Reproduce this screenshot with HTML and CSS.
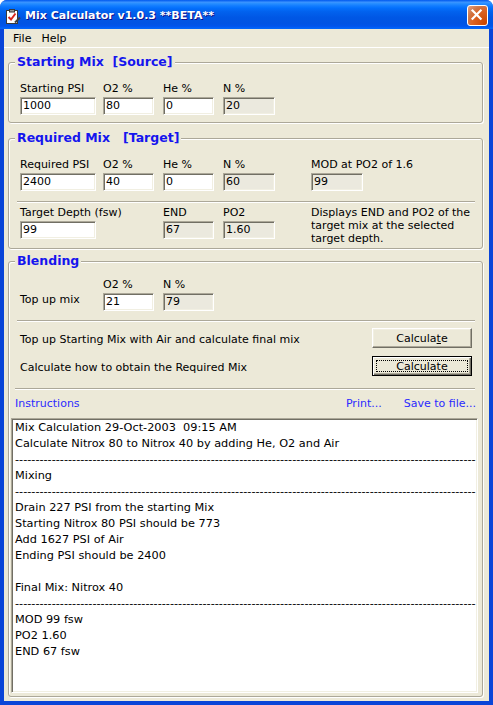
FILE: index.html
```html
<!DOCTYPE html>
<html>
<head>
<meta charset="utf-8">
<title>Mix Calculator</title>
<link rel="stylesheet" href="styles.css">
</head>
<body>
<div class="window">
  <div class="titlebar">
    <svg class="app-icon" viewBox="0 0 16 16" width="16" height="16">
      <rect x="1.5" y="2.5" width="11" height="13" fill="#fff" stroke="#3a3a3a"/>
      <rect x="4.5" y="1.5" width="5" height="2.5" fill="#9a9a9a" stroke="#3a3a3a"/>
      <path d="M3.5 9 L6 11.5 L10.5 5.5" stroke="#d8261c" stroke-width="2" fill="none"/>
      <path d="M10 14.5 L15 9.5" stroke="#404040" stroke-width="2"/>
    </svg>
    <span class="title">Mix Calculator v1.0.3 **BETA**</span>
    <div class="close">
      <svg viewBox="0 0 21 21" width="19" height="19"><path d="M5 5 L14 14 M14 5 L5 14" stroke="#fff" stroke-width="2.4" stroke-linecap="square"/></svg>
    </div>
  </div>
  <div class="client">
    <div class="menubar"><span>File</span><span>Help</span></div>

    <fieldset class="group g-source">
      <legend>Starting Mix&nbsp; [Source]</legend>
      <div class="grid">
        <div class="fld"><div class="lbl">Starting PSI</div><div class="edit w76">1000</div></div>
        <div class="fld"><div class="lbl">O2 %</div><div class="edit w51">80</div></div>
        <div class="fld"><div class="lbl">He %</div><div class="edit w51">0</div></div>
        <div class="fld"><div class="lbl">N %</div><div class="edit w52 ro">20</div></div>
      </div>
    </fieldset>

    <fieldset class="group g-target">
      <legend>Required Mix&nbsp;&nbsp; [Target]</legend>
      <div class="grid">
        <div class="fld"><div class="lbl">Required PSI</div><div class="edit w76">2400</div></div>
        <div class="fld"><div class="lbl">O2 %</div><div class="edit w51">40</div></div>
        <div class="fld"><div class="lbl">He %</div><div class="edit w51">0</div></div>
        <div class="fld"><div class="lbl">N %</div><div class="edit w52 ro">60</div></div>
        <div class="fld"><div class="lbl">MOD at PO2 of 1.6</div><div class="edit w52 ro">99</div></div>
      </div>
      <div class="sep"></div>
      <div class="grid row2">
        <div class="fld"><div class="lbl">Target Depth (fsw)</div><div class="edit w76">99</div></div>
        <div class="fld"></div>
        <div class="fld"><div class="lbl">END</div><div class="edit w51 ro">67</div></div>
        <div class="fld"><div class="lbl">PO2</div><div class="edit w52 ro">1.60</div></div>
        <div class="desc">Displays END and PO2 of the target mix at the selected target depth.</div>
      </div>
    </fieldset>

    <fieldset class="group g-blend">
      <legend>Blending</legend>
      <div class="grid">
        <div class="fld"><div class="topup">Top up mix</div></div>
        <div class="fld"><div class="lbl">O2 %</div><div class="edit w51">21</div></div>
        <div class="fld"><div class="lbl">N %</div><div class="edit w51 ro">79</div></div>
      </div>
      <div class="sep sep-a"></div>
      <div class="actrow first">
        <span class="acttext">Top up Starting Mix with Air and calculate final mix</span>
        <div class="btn">Calcula<u>t</u>e</div>
      </div>
      <div class="actrow second">
        <span class="acttext">Calculate how to obtain the Required Mix</span>
        <div class="btn default">Calculate</div>
      </div>
      <div class="sep sep-b"></div>
      <div class="links">
        <a>Instructions</a>
        <span class="spacer"></span>
        <a>Print...</a>
        <a class="save">Save to file...</a>
      </div>
      <div class="output">
        <div>Mix Calculation 29-Oct-2003&nbsp; 09:15 AM</div>
        <div>Calculate Nitrox 80 to Nitrox 40 by adding He, O2 and Air</div>
        <div class="dash">-----------------------------------------------------------------------------------------------------------------</div>
        <div>Mixing</div>
        <div class="dash">-----------------------------------------------------------------------------------------------------------------</div>
        <div>Drain 227 PSI from the starting Mix</div>
        <div>Starting Nitrox 80 PSI should be 773</div>
        <div>Add 1627 PSI of Air</div>
        <div>Ending PSI should be 2400</div>
        <div>&nbsp;</div>
        <div>Final Mix: Nitrox 40</div>
        <div class="dash">-----------------------------------------------------------------------------------------------------------------</div>
        <div>MOD 99 fsw</div>
        <div>PO2 1.60</div>
        <div>END 67 fsw</div>
      </div>
    </fieldset>
  </div>
</div>
</body>
</html>
```
FILE: styles.css
```css
* { box-sizing: border-box; }
html, body { margin: 0; padding: 0; background: #fff; }
body {
  width: 493px; height: 705px; overflow: hidden;
  font-family: "DejaVu Sans", Verdana, sans-serif;
  font-size: 11px; color: #000;
}
.window {
  width: 493px; height: 705px;
  display: flex; flex-direction: column;
  background: #0a45d8;
  border-radius: 7px 7px 0 0;
  overflow: hidden;
}
.titlebar {
  height: 29px; flex: none;
  display: flex; align-items: center;
  padding: 2px 5px 0 5px;
  background: linear-gradient(#0058ee 0%, #3a93ff 8%, #288eff 12%, #127dff 20%, #036ffc 28%, #0262ee 40%, #0057e5 60%, #0054e3 80%, #0055eb 90%, #005bf5 94%, #026afe 97%, #0062ef 100%);
}
.app-icon { flex: none; margin-right: 4px; }
.title {
  flex: 1; color: #fff; font-weight: bold; font-size: 11px;
  text-shadow: 1px 1px #0f1089; white-space: nowrap;
}
.close {
  width: 21px; height: 21px; flex: none;
  border: 1px solid #fff; border-radius: 3px;
  background: radial-gradient(circle at 90% 90%, #cc4600 0%, #dc6527 55%, #cd7546 70%, #e8a383 100%);
  display: flex; align-items: center; justify-content: center;
}
.client {
  flex: 1; min-height: 0;
  margin: 0 4px 4px;
  background: #ece9d8;
  display: flex; flex-direction: column;
}
.menubar {
  height: 19px; flex: none;
  display: flex; align-items: center;
  padding-left: 4px;
  border-bottom: 1px solid #fff;
}
.menubar span { padding: 0 5px; }

.group {
  margin: 6px 6px 0 4px;
  padding: 0;
  min-width: 0;
  border: 1px solid #aca899;
  border-radius: 3px;
  box-shadow: inset 1px 1px 0 #fff, 1px 1px 0 #fff;
}
.group legend {
  margin-left: 6px; padding: 0 2px;
  font-weight: bold; font-size: 12.5px; line-height: 16px;
  color: #1515ee; background: #ece9d8;
  white-space: nowrap;
}
.g-source { padding: 12px 0 7px; }
.g-target { margin-top: 7px; padding: 12px 0 3px; }
.g-blend {
  margin-top: 4px; margin-bottom: 4px;
  padding: 9px 0 3px;
  flex: 1; min-height: 0;
  display: flex; flex-direction: column;
}

.grid {
  display: grid;
  grid-template-columns: 83px 60px 60px 88px 1fr;
  padding-left: 11px;
}
.row2 { margin-top: 3px; }
.lbl { height: 13px; line-height: 13px; white-space: nowrap; }
.edit {
  margin-top: 2px; height: 18px;
  border: 1px solid; border-color: #aca899 #fff #fff #aca899;
  box-shadow: inset 1px 1px 0 #716f64, inset -1px -1px 0 #f1efe2;
  background: #fff;
  padding: 0 2px;
  line-height: 16px;
  white-space: nowrap;
}
.edit.ro { background: #ebe9de; }
.w76 { width: 76px; }
.w51 { width: 51px; }
.w52 { width: 52px; }
.desc { line-height: 13px; padding-right: 4px; }
.topup { padding-top: 15px; line-height: 13px; white-space: nowrap; }

.sep {
  height: 2px; flex: none;
  border-top: 1px solid #aca899; border-bottom: 1px solid #fff;
  margin: 10px 7px 0 8px;
}
.sep-a { margin-top: 9px; }
.sep-b { margin-top: 12px; margin-left: 6px; }

.actrow {
  display: flex; align-items: center; justify-content: space-between;
  padding: 0 10px 0 11px; flex: none;
}
.actrow.first { margin-top: 6px; }
.actrow.second { margin-top: 8px; }
.acttext { padding-top: 3px; white-space: nowrap; }
.btn {
  width: 100px; height: 20px;
  background: #ece9d8;
  border: 1px solid; border-color: #fff #716f64 #716f64 #fff;
  box-shadow: inset -1px -1px 0 #aca899, inset 1px 1px 0 #f1efe2;
  display: flex; align-items: center; justify-content: center;
  line-height: 13px;
}
.btn.default {
  border-color: #000;
  box-shadow: inset 1px 1px 0 #fff, inset -1px -1px 0 #716f64, inset -2px -2px 0 #aca899;
  outline: 1px dotted #000; outline-offset: -5px;
}

.links {
  display: flex; flex: none;
  margin-top: 7px; padding: 0 6px;
  line-height: 14px;
}
.links a { color: #2b2bff; text-decoration: none; cursor: pointer; }
.links .spacer { flex: 1; }
.links .save { margin-left: 22px; }

.output {
  flex: 1; min-height: 0;
  margin: 7px 4px 0 2px;
  background: #fff;
  border: 1px solid; border-color: #aca899 #fff #fff #aca899;
  box-shadow: inset 1px 1px 0 #716f64, inset -1px -1px 0 #f1efe2;
  padding: 1px 3px 1px 3px;
  font-size: 11.3px; line-height: 16px;
  color: #000;
  overflow: hidden;
}
.output div { white-space: nowrap; }
```
